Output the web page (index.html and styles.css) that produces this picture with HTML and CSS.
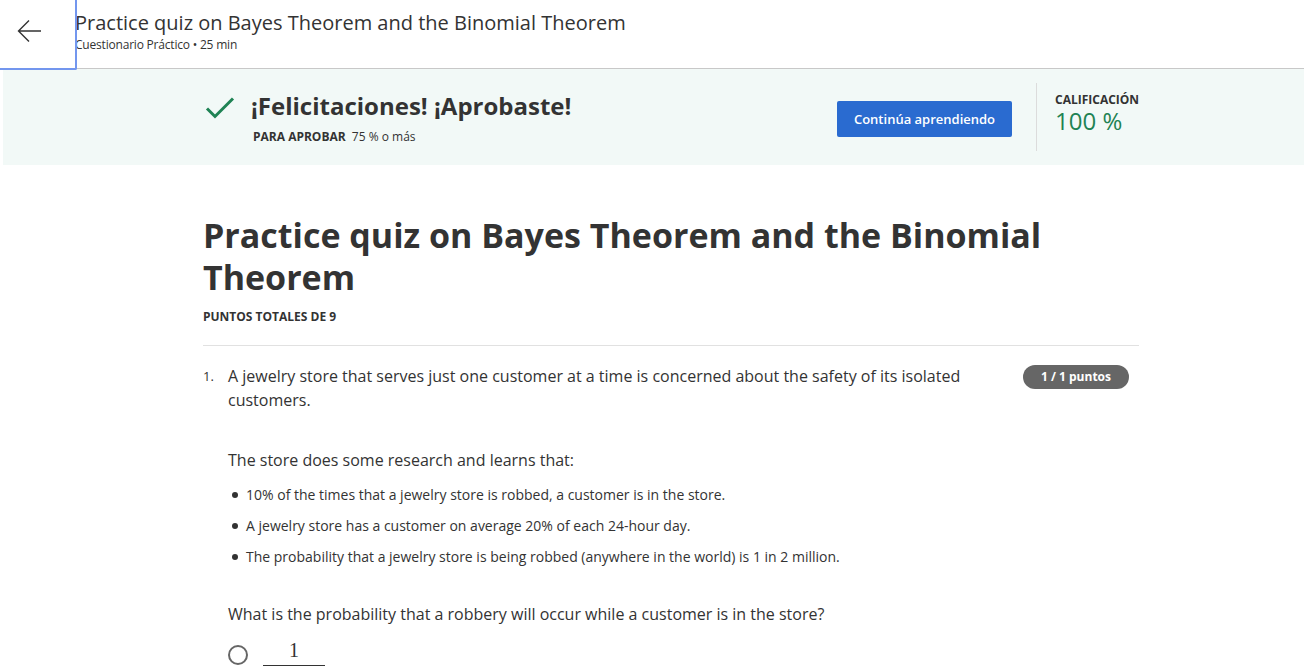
FILE: index.html
```html
<!DOCTYPE html>
<html lang="es">
<head>
<meta charset="utf-8">
<title>Practice quiz</title>
<link rel="stylesheet" href="styles.css">
</head>
<body>
<header class="topbar">
  <button class="back" aria-label="Back">
    <svg width="26" height="26" viewBox="0 0 26 26"><path d="M24 13H2M12 2.5L1.5 13 12 23.5" fill="none" stroke="#333" stroke-width="1.4"/></svg>
  </button>
  <div class="top-text">
    <div class="top-title">Practice quiz on Bayes Theorem and the Binomial Theorem</div>
    <div class="top-sub">Cuestionario Práctico • 25 min</div>
  </div>
</header>
<section class="banner">
  <div class="banner-inner">
    <svg class="check" width="30" height="24" viewBox="0 0 30 24"><path d="M2 12.5l8 8L28 2.5" fill="none" stroke="#1f8354" stroke-width="3"/></svg>
    <div class="congrats">
      <div class="congrats-title">¡Felicitaciones! ¡Aprobaste!</div>
      <div class="pass"><b>PARA APROBAR</b> 75 % o más</div>
    </div>
    <button class="cta">Continúa aprendiendo</button>
    <div class="grade">
      <div class="grade-label">CALIFICACIÓN</div>
      <div class="grade-value">100 %</div>
    </div>
  </div>
</section>
<main class="content">
  <h1 class="quiz-title">Practice quiz on Bayes Theorem and the Binomial Theorem</h1>
  <div class="points">PUNTOS TOTALES DE 9</div>
  <div class="question">
    <div class="qnum">1.</div>
    <div class="qbody">
      <div class="qhead">
        <p class="qtext">A jewelry store that serves just one customer at a time is concerned about the safety of its isolated customers.</p>
        <span class="badge">1 / 1 puntos</span>
      </div>
      <p class="para">The store does some research and learns that:</p>
      <ul class="facts">
        <li>10% of the times that a jewelry store is robbed, a customer is in the store.</li>
        <li>A jewelry store has a customer on average 20% of each 24-hour day.</li>
        <li>The probability that a jewelry store is being robbed (anywhere in the world) is 1 in 2 million.</li>
      </ul>
      <p class="para ask">What is the probability that a robbery will occur while a customer is in the store?</p>
      <div class="option">
        <span class="radio"></span>
        <span class="frac"><span class="num">1</span></span>
      </div>
    </div>
  </div>
</main>
</body>
</html>
```
FILE: styles.css
```css
* { box-sizing: border-box; }
html, body { margin: 0; padding: 0; }
body {
  font-family: "Open Sans", "Liberation Sans", sans-serif;
  color: #333;
  background: #fff;
  overflow: hidden;
  height: 670px;
}
.topbar {
  display: flex;
  height: 69px;
  border-bottom: 1px solid #c8c8c8;
}
.back {
  width: 77px;
  height: 70px;
  margin: 0;
  padding: 0 16px 6px 0;
  background: #fff;
  border: none;
  border-right: 2px solid #7396ee;
  border-bottom: 2px solid #7396ee;
  border-radius: 0 0 2px 0;
  display: flex;
  align-items: center;
  justify-content: center;
  position: relative;
  z-index: 2;
}
.top-text { margin-left: -2px; padding-top: 8px; }
.top-title { font-size: 20px; line-height: 30px; color: #333; }
.top-sub { font-size: 12px; line-height: 14px; color: #333; letter-spacing: -0.2px; }

.banner {
  background: #f2f9f7;
  margin-left: 3px;
  height: 96px;
}
.banner-inner {
  display: flex;
  align-items: flex-start;
  margin-left: 202px;
  height: 100%;
}
.check { margin-top: 27px; flex: none; }
.congrats { margin-left: 16px; padding-top: 20px; width: 586px; }
.congrats-title { font-size: 24px; font-weight: 700; line-height: 34px; color: #333; }
.pass { font-size: 12px; color: #333; margin-top: 5px; padding-left: 2px; }
.pass b { margin-right: 3px; }
.cta {
  margin-top: 32px;
  width: 175px;
  height: 36px;
  background: #2a6bd0;
  color: #fff;
  border: none;
  border-radius: 2px;
  font-family: inherit;
  font-size: 13px;
  font-weight: 600;
}
.grade {
  margin-left: 24px;
  margin-top: 14px;
  height: 68px;
  border-left: 1px solid #dcdcdc;
  padding-left: 18px;
  padding-top: 10px;
}
.grade-label { font-size: 12px; font-weight: 700; line-height: 14px; }
.grade-value { font-size: 24px; line-height: 28px; color: #1f8354; }

.content { margin-left: 203px; width: 936px; padding-top: 49px; }
.quiz-title {
  margin: 0;
  font-size: 34px;
  line-height: 42px;
  font-weight: 700;
  color: #333;
}
.points {
  font-size: 12px;
  font-weight: 700;
  margin-top: 10px;
  padding-bottom: 20px;
  border-bottom: 1px solid #e1e1e1;
}
.question { display: flex; padding-top: 18px; }
.qnum { width: 25px; font-size: 13px; line-height: 24px; flex: none; }
.qbody { flex: 1; }
.qhead { display: flex; align-items: flex-start; justify-content: space-between; }
.qtext { margin: 0; font-size: 16px; line-height: 24px; width: 760px; }
.badge {
  margin-top: 1px;
  margin-right: 10px;
  background: #666;
  color: #fff;
  font-size: 12px;
  font-weight: 700;
  border-radius: 12px;
  height: 24px;
  line-height: 24px;
  width: 106px;
  text-align: center;
}
.para { margin: 0; font-size: 16px; line-height: 24px; }
.qhead + .para { margin-top: 36px; }
.facts { margin: 13px 0 0; padding: 0 0 0 18px; font-size: 14px; list-style: none; }
.facts li { line-height: 20px; margin-bottom: 11px; position: relative; }
.facts li::before {
  content: "";
  position: absolute;
  left: -14px;
  top: 7px;
  width: 6px;
  height: 6px;
  border-radius: 50%;
  background: #333;
}
.ask { margin-top: 35px; }
.option { display: flex; align-items: flex-start; }
.radio {
  width: 20px; height: 20px;
  border: 2px solid #666;
  border-radius: 50%;
  margin-top: 19px;
}
.frac {
  margin-left: 15px;
  margin-top: 11px;
  width: 62px;
  padding-bottom: 2px;
  border-bottom: 1px solid #333;
  text-align: center;
  font-family: "Liberation Serif", serif;
  font-size: 20px;
  line-height: 26px;
}
```
